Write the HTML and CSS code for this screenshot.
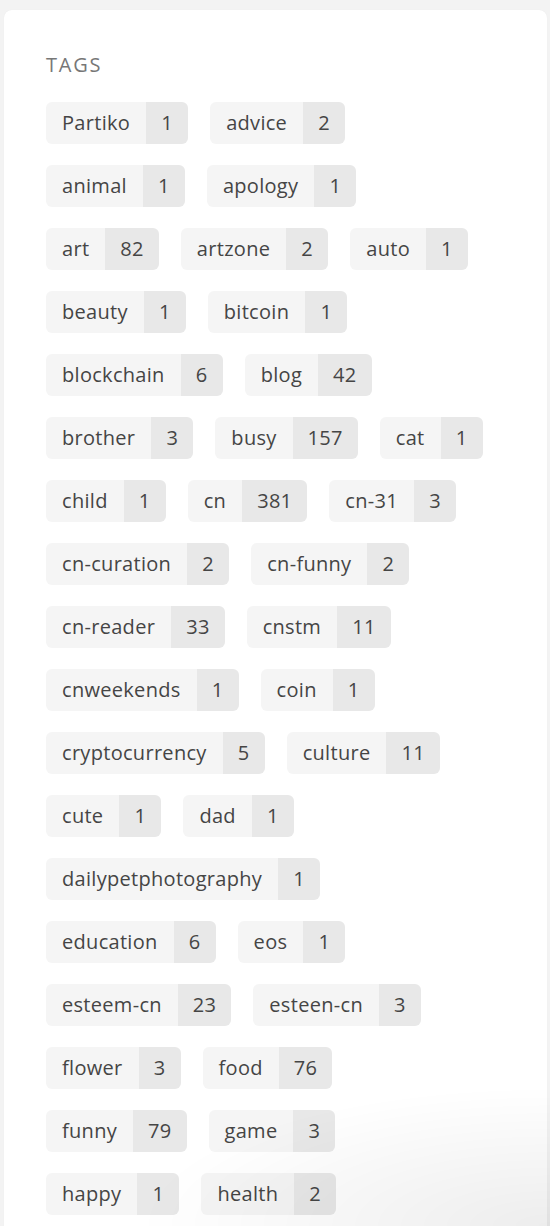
FILE: index.html
```html
<!DOCTYPE html>
<html lang="en">
<head>
<meta charset="utf-8">
<title>Tags</title>
<link rel="stylesheet" href="styles.css">
</head>
<body>
<div class="page">
  <section class="card">
    <h2 class="card-title">TAGS</h2>
    <div class="tag-list">
      <a class="tag"><span class="tag-name">Partiko</span><span class="tag-count">1</span></a>
      <a class="tag"><span class="tag-name">advice</span><span class="tag-count">2</span></a>
      <a class="tag"><span class="tag-name">animal</span><span class="tag-count">1</span></a>
      <a class="tag"><span class="tag-name">apology</span><span class="tag-count">1</span></a>
      <a class="tag"><span class="tag-name">art</span><span class="tag-count">82</span></a>
      <a class="tag"><span class="tag-name">artzone</span><span class="tag-count">2</span></a>
      <a class="tag"><span class="tag-name">auto</span><span class="tag-count">1</span></a>
      <a class="tag"><span class="tag-name">beauty</span><span class="tag-count">1</span></a>
      <a class="tag"><span class="tag-name">bitcoin</span><span class="tag-count">1</span></a>
      <a class="tag"><span class="tag-name">blockchain</span><span class="tag-count">6</span></a>
      <a class="tag"><span class="tag-name">blog</span><span class="tag-count">42</span></a>
      <a class="tag"><span class="tag-name">brother</span><span class="tag-count">3</span></a>
      <a class="tag"><span class="tag-name">busy</span><span class="tag-count">157</span></a>
      <a class="tag"><span class="tag-name">cat</span><span class="tag-count">1</span></a>
      <a class="tag"><span class="tag-name">child</span><span class="tag-count">1</span></a>
      <a class="tag"><span class="tag-name">cn</span><span class="tag-count">381</span></a>
      <a class="tag"><span class="tag-name">cn-31</span><span class="tag-count">3</span></a>
      <a class="tag"><span class="tag-name">cn-curation</span><span class="tag-count">2</span></a>
      <a class="tag"><span class="tag-name">cn-funny</span><span class="tag-count">2</span></a>
      <a class="tag"><span class="tag-name">cn-reader</span><span class="tag-count">33</span></a>
      <a class="tag"><span class="tag-name">cnstm</span><span class="tag-count">11</span></a>
      <a class="tag"><span class="tag-name">cnweekends</span><span class="tag-count">1</span></a>
      <a class="tag"><span class="tag-name">coin</span><span class="tag-count">1</span></a>
      <a class="tag"><span class="tag-name">cryptocurrency</span><span class="tag-count">5</span></a>
      <a class="tag"><span class="tag-name">culture</span><span class="tag-count">11</span></a>
      <a class="tag"><span class="tag-name">cute</span><span class="tag-count">1</span></a>
      <a class="tag"><span class="tag-name">dad</span><span class="tag-count">1</span></a>
      <a class="tag"><span class="tag-name">dailypetphotography</span><span class="tag-count">1</span></a>
      <a class="tag"><span class="tag-name">education</span><span class="tag-count">6</span></a>
      <a class="tag"><span class="tag-name">eos</span><span class="tag-count">1</span></a>
      <a class="tag"><span class="tag-name">esteem-cn</span><span class="tag-count">23</span></a>
      <a class="tag"><span class="tag-name">esteen-cn</span><span class="tag-count">3</span></a>
      <a class="tag"><span class="tag-name">flower</span><span class="tag-count">3</span></a>
      <a class="tag"><span class="tag-name">food</span><span class="tag-count">76</span></a>
      <a class="tag"><span class="tag-name">funny</span><span class="tag-count">79</span></a>
      <a class="tag"><span class="tag-name">game</span><span class="tag-count">3</span></a>
      <a class="tag"><span class="tag-name">happy</span><span class="tag-count">1</span></a>
      <a class="tag"><span class="tag-name">health</span><span class="tag-count">2</span></a>
    </div>
  </section>
</div>
<div class="bottom-shade"></div>
</body>
</html>
```

FILE: styles.css
```css
html, body {
  margin: 0;
  padding: 0;
  background: #f3f3f3;
  font-family: "Open Sans", "Noto Sans", sans-serif;
}

.page {
  padding: 10px 3px 0 4px;
}

.card {
  background: #ffffff;
  border-radius: 8px;
  padding: 41px 42px 40px 42px;
  box-shadow: 0 0 1px rgba(0, 0, 0, 0.06);
}

.card-title {
  margin: 0 0 24px 0;
  font-size: 20px;
  line-height: 27px;
  font-weight: 400;
  letter-spacing: 1.8px;
  color: #777777;
}

.tag-list {
  display: flex;
  flex-wrap: wrap;
  column-gap: 22px;
  row-gap: 21px;
  max-width: 440px;
}

.tag {
  display: flex;
  height: 42px;
  border-radius: 6px;
  overflow: hidden;
  font-size: 20px;
  line-height: 42px;
  letter-spacing: 0.3px;
  color: #454545;
  text-decoration: none;
}

.tag-name {
  background: #f5f5f5;
  padding: 0 16px;
}

.tag-count {
  background: #e8e8e8;
  padding: 0 15px;
  min-width: 12px;
  text-align: center;
}

.bottom-shade {
  position: fixed;
  left: 0;
  right: 0;
  bottom: 0;
  height: 140px;
  pointer-events: none;
  background: radial-gradient(ellipse 75% 100% at 100% 100%, rgba(0, 0, 0, 0.07), rgba(0, 0, 0, 0) 100%);
}
```
